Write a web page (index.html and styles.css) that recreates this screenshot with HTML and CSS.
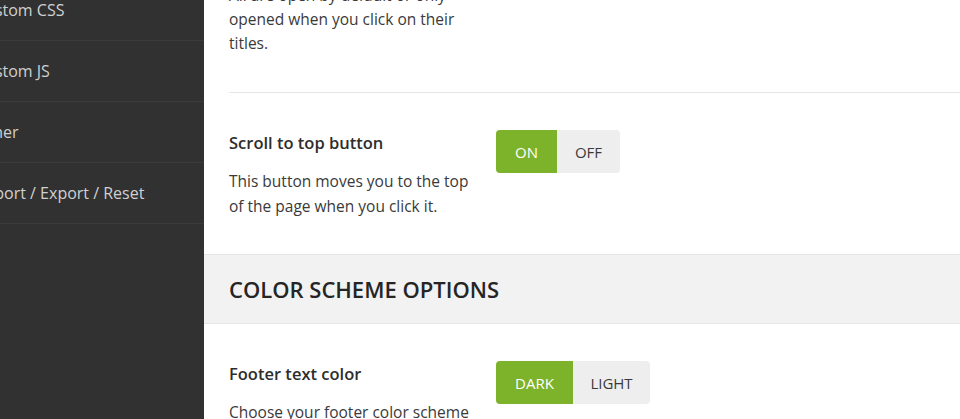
FILE: index.html
```html
<!DOCTYPE html>
<html>
<head>
<meta charset="utf-8">
<link rel="stylesheet" href="styles.css">
</head>
<body>
<div class="app">
  <aside class="sidebar">
    <ul class="menu">
      <li>Custom CSS</li>
      <li>Custom JS</li>
      <li>Other</li>
      <li>Import / Export / Reset</li>
    </ul>
  </aside>
  <main class="content">
    <div class="option first">
      <div class="option-text">
        <p class="desc">All are open by default or only opened when you click on their titles.</p>
      </div>
    </div>
    <div class="option">
      <div class="option-text">
        <h3 class="title">Scroll to top button</h3>
        <p class="desc">This button moves you to the top of the page when you click it.</p>
      </div>
      <div class="toggle">
        <span class="seg on">ON</span>
        <span class="seg">OFF</span>
      </div>
    </div>
    <div class="section-head">
      <h2>COLOR SCHEME OPTIONS</h2>
    </div>
    <div class="option">
      <div class="option-text">
        <h3 class="title">Footer text color</h3>
        <p class="desc">Choose your footer color scheme</p>
      </div>
      <div class="toggle wide">
        <span class="seg on">DARK</span>
        <span class="seg">LIGHT</span>
      </div>
    </div>
  </main>
</div>
</body>
</html>
```
FILE: styles.css
```css
* { box-sizing: border-box; }
html, body { margin: 0; padding: 0; height: 100%; overflow: hidden; }
body {
  font-family: "Open Sans", "Noto Sans", sans-serif;
  background: #fff;
  color: #333;
}
.app { display: flex; height: 419px; }
.sidebar {
  width: 204px;
  flex: none;
  background: #313131;
  overflow: hidden;
}
.menu {
  list-style: none;
  margin: -20px 0 0 -37px;
  padding: 0;
}
.menu li {
  height: 61px;
  display: flex;
  align-items: center;
  padding-left: 12px;
  border-bottom: 1px solid #3b3b3b;
  color: #d0d0d0;
  font-size: 16px;
  white-space: nowrap;
}
.content { flex: 1; overflow: hidden; }
.option {
  display: flex;
  align-items: flex-start;
  margin: 0 0 0 25px;
  padding: 37px 0 35px;
}
.option.first {
  margin-top: -17px;
  padding-top: 0;
  padding-bottom: 37px;
  border-bottom: 1px solid #e6e6e6;
}
.option-text { width: 246px; margin-right: 21px; }
.title {
  margin: 0;
  font-size: 16.5px;
  font-weight: 600;
  line-height: 26px;
  color: #2d2d2d;
}
.desc {
  margin: 13px 0 0;
  font-size: 15.5px;
  line-height: 25px;
  color: #3a3a3a;
}
.first .desc { margin: 0; line-height: 24px; }
.toggle {
  display: flex;
  height: 43px;
  border-radius: 4px;
  overflow: hidden;
  background: #eeeeee;
}
.seg {
  display: flex;
  align-items: center;
  justify-content: center;
  width: 63px;
  font-size: 15px;
  color: #3a3a3a;
}
.seg.on { width: 61px; background: #7db22b; color: #fff; }
.wide .seg { width: 77px; }
.section-head {
  height: 70px;
  background: #f2f2f2;
  border-top: 1px solid #e6e6e6;
  border-bottom: 1px solid #e6e6e6;
  display: flex;
  align-items: center;
  padding-left: 25px;
}
.section-head h2 {
  margin: 0;
  font-size: 22px;
  font-weight: 600;
  color: #252525;
}
```
